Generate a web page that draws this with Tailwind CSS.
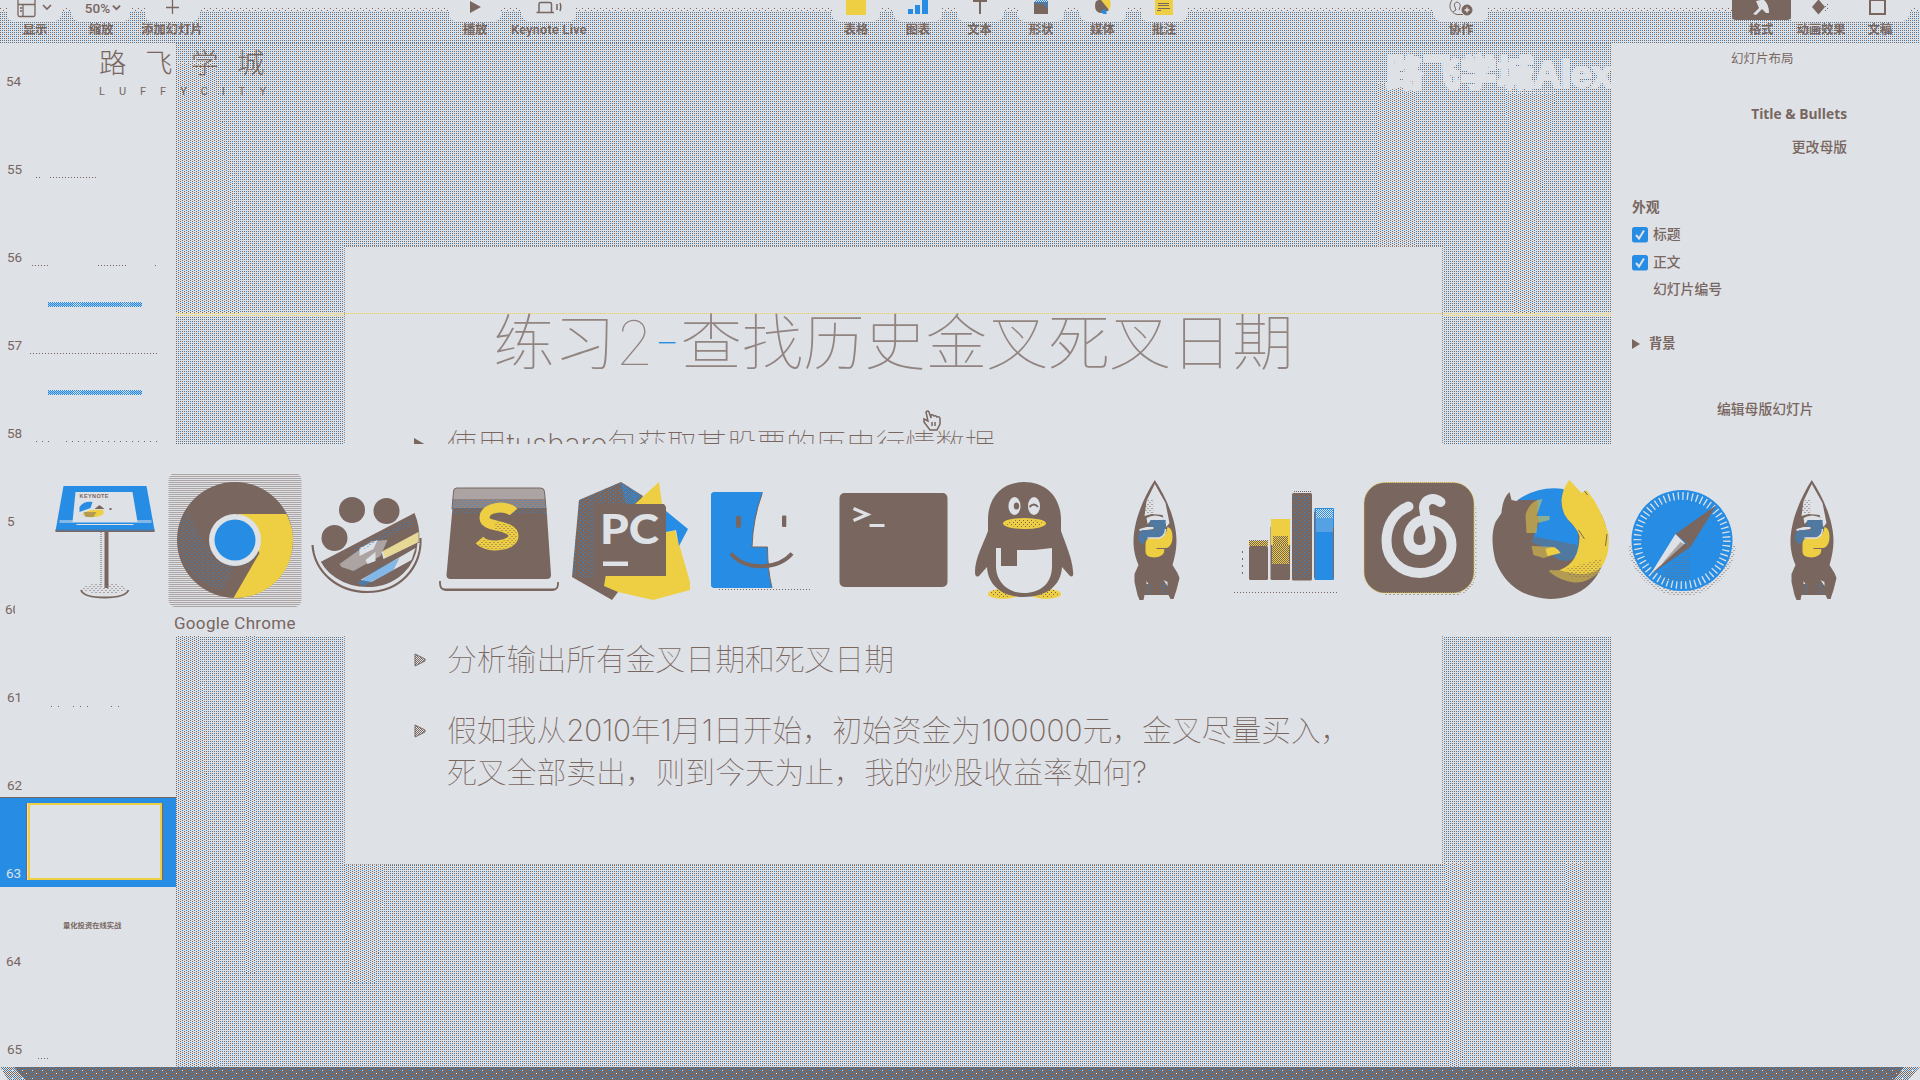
<!DOCTYPE html>
<html lang="zh-CN">
<head>
<meta charset="utf-8">
<title>Keynote</title>
<script src="https://cdn.jsdelivr.net/npm/@tailwindcss/browser@4"></script>
</head>
<body class="w-[1920px] h-[1080px] overflow-hidden bg-[#dee1e6] text-[#78665f] font-['Liberation_Sans','Noto_Sans_CJK_SC',sans-serif]">
<svg class="absolute w-0 h-0" shape-rendering="crispEdges">
  <defs>
    <pattern id="mesh" width="6" height="4" patternUnits="userSpaceOnUse"><path fill="#78665f" d="M0 0h1v1h-1zM2 0h1v1h-1zM0 2h1v1h-1zM4 2h1v1h-1z"/><path fill="#278ce3" d="M4 0h1v1h-1zM2 2h1v1h-1z"/></pattern>
    <pattern id="mesh2" width="4" height="4" patternUnits="userSpaceOnUse"><path fill="#78665f" d="M0 0h1v1h-1zM2 1h1v1h-1zM0 2h1v1h-1z"/><path fill="#278ce3" d="M2 3h1v1h-1z"/></pattern>
    <pattern id="dots" width="4" height="4" patternUnits="userSpaceOnUse"><path fill="#78665f" d="M0 0h1v1h-1zM2 0h1v1h-1zM1 2h1v1h-1zM3 2h1v1h-1z"/></pattern>
    <pattern id="fade" width="6" height="4" patternUnits="userSpaceOnUse"><path fill="#78665f" d="M0 0h1v1h-1zM3 2h1v1h-1z"/></pattern>
    <pattern id="bluecheck" width="2" height="2" patternUnits="userSpaceOnUse"><path fill="#278ce3" d="M0 0h1v1h-1zM1 1h1v1h-1z"/></pattern>
    <pattern id="browncheck" width="2" height="2" patternUnits="userSpaceOnUse"><path fill="#78665f" d="M0 0h1v1h-1zM1 1h1v1h-1z"/></pattern>
    <pattern id="lightcheck" width="2" height="2" patternUnits="userSpaceOnUse"><path fill="#dee1e6" d="M0 0h1v1h-1zM1 1h1v1h-1z"/></pattern>
    <pattern id="yellowcheck" width="2" height="2" patternUnits="userSpaceOnUse"><path fill="#eecf43" d="M0 0h1v1h-1zM1 1h1v1h-1z"/></pattern>
    <pattern id="bluespeck" width="5" height="4" patternUnits="userSpaceOnUse"><path fill="#278ce3" d="M0 0h1v1h-1zM3 2h1v1h-1z"/></pattern>
    <pattern id="brownspeck" width="4" height="4" patternUnits="userSpaceOnUse"><path fill="#78665f" d="M0 0h1v1h-1zM2 2h1v1h-1z"/></pattern>
    <pattern id="floor" width="10" height="8" patternUnits="userSpaceOnUse"><path fill="#278ce3" d="M0 0h1v1h-1zM3 2h1v1h-1zM6 1h1v1h-1zM8 3h1v1h-1zM1 5h1v1h-1zM5 4h1v1h-1zM8 6h1v1h-1zM4 7h1v1h-1zM3 0h1v1h-1zM9 1h1v1h-1zM0 3h1v1h-1zM5 2h1v1h-1zM3 5h1v1h-1z"/><path fill="#dee1e6" d="M2 3h1v1h-1zM6 6h1v1h-1z"/></pattern>
    <symbol id="rocket" viewBox="1090.5 470 131.5 140">
      <path fill="#78665f" d="M1155.300 480C1145 496 1134 520 1134 542C1134 552 1137 560 1139 565L1135 574V582L1138 595L1140 600H1144L1145 595H1169L1171 599H1174L1177 590L1180 578L1178 573L1173 565C1175 558 1177 550 1177 541C1177 520 1166 496 1155.300 480Z"/>
      <path fill="#dee1e6" d="M1155.300 484L1147 501L1145 516L1152 514L1163 515L1167 527L1170 523L1166 503Z"/>
      <path fill="url(#brownspeck)" d="M1148 500H1154V514H1144Z"/>
      <path fill="#dee1e6" d="M1147 518Q1155 513 1165 518L1164 520H1152L1148 524ZM1140 529L1147 527H1154V529L1140 531Z"/>
      <path fill="#278ce3" d="M1151 520H1166V530Q1166 537 1158 537H1150Q1145 540 1143 545L1139 540Q1138 531 1144 530H1155V527H1150Z"/>
      <path fill="url(#browncheck)" d="M1151 520H1166V530Q1166 537 1158 537H1150Q1145 540 1143 545L1139 540Q1138 531 1144 530H1155V527H1150Z"/>
      <path fill="#eecf43" d="M1168 527Q1173 528 1173 537Q1173 546 1167 548H1157V549H1165Q1165 557 1155 557.500Q1146 557 1146 552V544Q1146 538 1152 538H1160Q1167 536 1168 527Z"/>
      <path fill="none" stroke="#dee1e6" stroke-width="1.500" d="M1148 538H1160Q1166 536 1166 529"/>
      <path fill="#dee1e6" d="M1147 581L1149 584H1147ZM1164 580L1168 582V586L1166 583Z"/>
      <path fill="url(#bluespeck)" d="M1146 584H1152V594H1146ZM1160 584H1168V594H1160Z"/>
    </symbol>
  </defs>
</svg>

<div class="flex flex-col w-[1920px] h-[1080px]">
  <!-- toolbar -->
  <header class="relative h-[43px] shrink-0">
    <svg class="absolute inset-0 w-full h-full"><rect y="7" width="1920" height="5" fill="url(#fade)"/><rect y="12" width="1920" height="32" fill="url(#mesh)"/></svg>
    <div class="relative flex h-full text-[12.300px] leading-[18px] font-bold whitespace-nowrap">
      <div class="w-[68px] flex flex-col items-center"><div class="w-[54px] h-[21px] rounded-b-md bg-[#dee1e6] flex justify-center gap-[5px]">
        <svg class="w-[20px] h-[21px]" viewBox="0 0 20 21" fill="none" stroke="#78665f" stroke-width="1.300"><path d="M1 0V15Q1 16.500 2.500 16.500H16.500Q18 16.500 18 15V0M1 4.500H18M6 4.500V16.500M3 8H5M3 11H5"/></svg><svg class="w-[10px] h-[21px]" viewBox="0 0 10 21" fill="none" stroke="#78665f" stroke-width="1.600"><path d="M1 5L5 9L9 5"/></svg></div><span class="pl-[2px]">显示</span></div>
      <div class="w-[66px] flex flex-col items-center"><div class="w-[58px] h-[21px] rounded-b-md bg-[#dee1e6] flex justify-center gap-[2px] pl-1 text-[13.500px] leading-[16px] font-['Roboto',sans-serif] font-medium"><span>50%</span><svg class="w-[9px] h-[21px]" viewBox="0 0 10 21" fill="none" stroke="#78665f" stroke-width="2"><path d="M1 5L5 9L9 5"/></svg></div><span>缩放</span></div>
      <div class="w-[76px] flex flex-col items-center"><div class="w-[54px] h-[21px] rounded-b-md bg-[#dee1e6] flex justify-center"><svg class="w-[14px] h-[21px]" viewBox="0 0 14 21" stroke="#78665f"><path d="M7.500 0V14M1 7.500H14" stroke-width="1.300"/></svg></div><span>添加幻灯片</span></div>
      <div class="w-[60px] ml-[235px] flex flex-col items-center"><div class="w-[52px] h-[21px] rounded-b-md bg-[#dee1e6] flex justify-center"><svg class="w-[12px] h-[21px]" viewBox="0 0 12 21"><path fill="#78665f" d="M1 1L12 7L1 13Z"/></svg></div><span>播放</span></div>
      <div class="w-[88px] flex flex-col items-center"><div class="w-[54px] h-[21px] rounded-b-md bg-[#dee1e6] flex justify-center"><svg class="w-[26px] h-[21px]" viewBox="0 0 26 21" fill="none" stroke="#78665f" stroke-width="1.500"><path d="M3 12V4Q3 2.500 4.500 2.500H14Q15.500 2.500 15.500 4V12M0.500 12.500H18M21 4V10M24 3Q25.500 7 24 11"/></svg></div><span class="font-semibold text-[12.500px] tracking-[0.35px] font-['Roboto',sans-serif]">Keynote Live</span></div>
      <div class="w-[62px] ml-[232px] flex flex-col items-center"><div class="w-[48px] h-[21px] rounded-b-md bg-[#dee1e6] flex justify-center"><div class="w-[20px] h-[15px] bg-[#eecf43]"></div></div><span>表格</span></div>
      <div class="w-[62px] flex flex-col items-center"><div class="w-[48px] h-[21px] rounded-b-md bg-[#dee1e6] flex justify-center"><svg class="w-[20px] h-[21px]" viewBox="0 0 20 21" fill="#278ce3"><path d="M0 9H5V14H0ZM7 5H12V14H7ZM14 0H20V14H14Z"/></svg></div><span>图表</span></div>
      <div class="w-[61px] flex flex-col items-center"><div class="w-[46px] h-[21px] rounded-b-md bg-[#dee1e6] flex justify-center"><svg class="w-[14px] h-[21px]" viewBox="0 0 14 21" fill="#78665f"><path d="M0 0H14V2H8V14H6V2H0Z"/></svg></div><span>文本</span></div>
      <div class="w-[62px] flex flex-col items-center"><div class="w-[46px] h-[21px] rounded-b-md bg-[#dee1e6] flex justify-center"><svg class="w-[14px] h-[21px]" viewBox="0 0 14 21"><path fill="#78665f" d="M0 2H14V14H0Z"/><path fill="url(#bluecheck)" d="M1 0H14V8L8 4H1Z"/></svg></div><span>形状</span></div>
      <div class="w-[61px] flex flex-col items-center"><div class="w-[46px] h-[21px] rounded-b-md bg-[#dee1e6] flex justify-center"><svg class="w-[18px] h-[21px]" viewBox="0 0 18 21"><path fill="#eecf43" d="M6 0H16Q18 6 14 11Z"/><path fill="#78665f" d="M1 6Q1 0 5 0H7L15 10L10 13Q1 14 1 6Z"/><path fill="#278ce3" d="M7 11L11 9L13 14H9Z"/></svg></div><span>媒体</span></div>
      <div class="w-[62px] flex flex-col items-center"><div class="w-[46px] h-[21px] rounded-b-md bg-[#dee1e6] flex justify-center"><svg class="w-[18px] h-[21px]" viewBox="0 0 18 21"><path fill="#eecf43" d="M0 0H18V15H0Z"/><path stroke="#78665f" d="M3 3.500H14M3 5.500H14M3 8.500H15M2 10.500H6"/></svg></div><span>批注</span></div>
      <div class="w-[62px] ml-[235px] flex flex-col items-center"><div class="w-[54px] h-[21px] rounded-b-md bg-[#dee1e6] flex justify-center"><svg class="w-[26px] h-[21px]" viewBox="0 0 26 21" fill="none" stroke="#78665f"><path d="M4 0C0 5 2 13 9 14.500H15M9 2Q5 3 7 7L8 10L5 12M9 2Q13 3 12 7L11 10"/><circle cx="19" cy="10" r="5" fill="#78665f"/><path stroke="#dee1e6" stroke-width="1.500" d="M16.500 10H21.500M19 7.500V12.500"/></svg></div><span>协作</span></div>
      <div class="w-[60px] ml-[239px] flex flex-col items-center"><div class="w-[59px] h-[20px] mb-[1px] rounded-b-sm bg-[#78665f] flex justify-center"><svg class="w-[18px] h-[20px]" viewBox="0 0 18 20"><path fill="#dee1e6" d="M4 1L9 0H12Q17 4 17 13H14L10 9L4 15L1 14L7 8Z"/></svg></div><span>格式</span></div>
      <div class="w-[60px] flex flex-col items-center"><div class="w-[60px] h-[21px] bg-[#dee1e6] flex justify-center"><svg class="w-[20px] h-[21px]" viewBox="0 0 20 21"><path fill="#78665f" d="M7 0H8L14 7L7.500 14.500L1 7Z"/><path fill="url(#brownspeck)" d="M14 3H17V11H14Z"/></svg></div><span>动画效果</span></div>
      <div class="w-[58px] flex flex-col items-center"><div class="w-[58px] h-[21px] rounded-br-md bg-[#dee1e6] flex justify-center"><div class="w-[17px] h-[15px] mr-[6px] border-2 border-t-1 border-[#78665f]"></div></div><span>文稿</span></div>
    </div>
  </header>

  <main class="flex h-[1024px]">
    <!-- slide navigator -->
    <aside class="w-[176px] shrink-0 flex flex-col text-[13.500px] leading-[28px] font-['Roboto',sans-serif]">
      <div class="h-[52px] shrink-0 flex items-end pl-[6px]">54</div>
      <div class="h-[88px] shrink-0 flex items-end pl-[7px]">55<svg class="w-[60px] h-[7px] ml-[14px]"><path stroke="#78665f" stroke-dasharray="1 2" d="M0 1.500H4M14 1.500H60"/></svg></div>
      <div class="h-[88px] shrink-0 flex items-end pl-[7px]">56<svg class="w-[130px] h-[7px] ml-[10px]"><path stroke="#78665f" stroke-dasharray="1 2" d="M0 1.500H17M66 1.500H95M123 1.500H124"/></svg></div>
      <div class="h-[88px] shrink-0 flex items-end pl-[7px] relative">57<svg class="w-[130px] h-[7px] ml-[8px]"><path stroke="#78665f" stroke-dasharray="1 2" d="M0 1.500H128"/></svg><svg class="absolute left-[48px] top-[31px] w-[94px] h-[5px]"><rect width="94" height="5" fill="url(#bluecheck)"/><path stroke="#278ce3" stroke-width="3" d="M0 2.500H25M33 2.500H74M82 2.500H94" stroke-opacity=".4"/></svg></div>
      <div class="h-[88px] shrink-0 flex items-end pl-[7px] relative">58<svg class="w-[130px] h-[7px] ml-[14px]"><path stroke="#78665f" stroke-dasharray="1 5" d="M0 1.500H18M30 1.500H123"/></svg><svg class="absolute left-[48px] top-[31px] w-[94px] h-[5px]"><rect width="94" height="5" fill="url(#bluecheck)"/><path stroke="#278ce3" stroke-width="3" d="M0 2.500H25M33 2.500H74M82 2.500H94" stroke-opacity=".4"/></svg></div>
      <div class="h-[88px] shrink-0 flex items-end pl-[7px]">59</div>
      <div class="h-[88px] shrink-0 flex items-end pl-[5px]">60</div>
      <div class="h-[88px] shrink-0 flex items-end pl-[7px]">61<svg class="w-[80px] h-[7px] ml-[29px]"><path stroke="#78665f" stroke-dasharray="1 6" d="M0 2.500H8M22 2.500H43M60 2.500H72"/></svg></div>
      <div class="h-[86px] shrink-0 flex items-end pl-[7px] leading-[24px]">62</div>
      <div class="h-[90px] shrink-0 flex items-end pl-[6px] bg-[#278ce3] border-t border-[#78665f] text-[#dee1e6] relative">63<div class="absolute left-[26px] top-[5px] w-[137px] h-[77px] border-l border-r border-[#78665f] bg-[#dee1e6]"><div class="w-[134px] h-[77px] ml-px border-2 border-[#eecf43]"></div></div></div>
      <div class="h-[88px] shrink-0 flex items-end pl-[6px] relative">64<div class="absolute left-[63px] top-[33px] text-[7.300px] leading-[11px] font-bold whitespace-nowrap font-['Noto_Sans_CJK_SC',sans-serif]">量化投资在线实战</div></div>
      <div class="h-[88px] shrink-0 flex items-end pl-[7px]">65<svg class="w-[12px] h-[7px] ml-[16px]"><path stroke="#78665f" stroke-dasharray="1 2" d="M0 2.500H11"/></svg></div>
    </aside>

    <!-- editing canvas -->
    <section class="relative w-[1436px] shrink-0">
      <svg class="absolute inset-0 w-full h-full" shape-rendering="crispEdges"><rect width="1436" height="1024" fill="url(#mesh)"/>
        <path fill="#dee1e6" d="M0 20H38L64 200V270H0ZM1200 40H1240V250H1200ZM1330 50H1380L1360 190V270H1335ZM1270 820H1296L1286 1024H1274ZM1390 820H1410L1406 1024H1394ZM0 590H24L44 1024H0ZM70 590H80V930H70ZM168 822H210L200 940H172Z"/>
        <path fill="url(#mesh2)" d="M0 20H38L64 200V270H0ZM1200 40H1240V250H1200ZM1330 50H1380L1360 190V270H1335ZM1270 820H1296L1286 1024H1274ZM1390 820H1410L1406 1024H1394ZM0 590H24L44 1024H0ZM70 590H80V930H70ZM168 822H210L200 940H172Z"/>
        <path stroke="#eecf43" stroke-dasharray="1 1" d="M0 270.500H1436M0 272.500H1436"/></svg>
      <div class="relative mt-[203px] ml-[168px] w-[1099px] h-[619px] bg-[#dee1e6] pt-[66px] pl-[70px] outline-1 outline-offset-[-1px] outline-dotted outline-[#78665f]/70">
        <svg class="absolute left-0 top-[67px] w-[1099px] h-[1px]"><path stroke="#eecf43" stroke-dasharray="1 1" d="M0 .5H1099"/></svg>
        <h1 class="relative pl-[79px] text-[61.300px] leading-[62px] whitespace-nowrap font-thin text-[#78665f]/75 font-['Inter','Noto_Sans_CJK_SC',sans-serif]">练习2<span class="text-[#278ce3]">-</span>查找历史金叉死叉日期</h1>
        <ul class="relative mt-[50px] text-[29.800px] leading-[41.500px] whitespace-nowrap font-thin font-['Inter','Noto_Sans_CJK_SC',sans-serif]">
          <li class="flex gap-[20px]"><svg class="w-[13px] h-[42px]" viewBox="0 0 13 42"><path fill="#78665f" d="M0 14L12 21L0 28Z"/></svg><p>使用<span class="font-extralight">tushare</span>包获取某股票的历史行情数据</p></li>
          <li class="flex gap-[20px] mt-[173px]"><svg class="w-[13px] h-[42px]" viewBox="0 0 13 42"><path fill="url(#browncheck)" stroke="#78665f" d="M1 15V27L11 22V20Z"/></svg><p>分析输出所有金叉日期和死叉日期</p></li>
          <li class="flex gap-[20px] mt-[29px]"><svg class="w-[13px] h-[42px]" viewBox="0 0 13 42"><path fill="url(#browncheck)" stroke="#78665f" d="M1 15V27L11 22V20Z"/></svg><p>假如我从<span class="font-extralight tracking-[-0.3px]">2010</span>年<span class="font-extralight">1</span>月<span class="font-extralight">1</span>日开始，初始资金为<span class="font-extralight">100000</span>元，金叉尽量买入，<br>死叉全部卖出，则到今天为止，我的炒股收益率如何<span class="font-extralight">?</span></p></li>
        </ul>
      </div>
    </section>

    <!-- format inspector -->
    <aside class="w-[308px] shrink-0 pt-[6px] pl-[20px] flex flex-col text-[13.800px] leading-[20px] font-medium">
      <div class="pl-[99px] text-[12.500px] font-normal">幻灯片布局</div>
      <div class="w-[215px] mt-[35px] text-right font-bold text-[13.800px] font-['Open_Sans',sans-serif] leading-[20px] whitespace-nowrap">Title &amp; Bullets</div>
      <div class="w-[215px] mt-[14px] text-right">更改母版</div>
      <div class="mt-[40px] font-bold">外观</div>
      <div class="mt-[7px] flex items-center gap-[5px]"><svg class="w-[16px] h-[16px]" viewBox="0 0 16 16"><rect width="16" height="15.500" rx="2.500" fill="#278ce3"/><path fill="none" stroke="#dee1e6" stroke-width="2" d="M4 8L7 11.500L12 3.500"/></svg>标题</div>
      <div class="mt-[8px] flex items-center gap-[5px]"><svg class="w-[16px] h-[16px]" viewBox="0 0 16 16"><rect width="16" height="15.500" rx="2.500" fill="#278ce3"/><path fill="none" stroke="#dee1e6" stroke-width="2" d="M4 8L7 11.500L12 3.500"/></svg>正文</div>
      <div class="mt-[7px] pl-[21px]">幻灯片编号</div>
      <div class="mt-[34px] flex items-center gap-[9px] font-bold text-[13.200px]"><svg class="w-[8px] h-[10px]" viewBox="0 0 8 10"><path fill="#78665f" d="M0 0L8 5L0 10Z"/></svg>背景</div>
      <div class="mt-[46px] pl-[85px]">编辑母版幻灯片</div>
    </aside>
  </main>
  <footer class="h-[13px] shrink-0 bg-[#78665f] relative"><svg class="w-full h-full"><rect width="1920" height="13" fill="url(#floor)"/><path fill="#dee1e6" d="M0 0L8 13H0ZM1920 0L1908 13H1920Z"/><path fill="url(#lightcheck)" d="M0 0H14L26 13H0ZM1920 0H1904L1894 13H1920Z"/></svg></footer>
</div>

<!-- watermarks -->
<div class="absolute left-[99px] top-[42px] font-['Noto_Sans_CJK_SC',sans-serif] whitespace-nowrap">
  <div class="text-[27.500px] leading-[38px] tracking-[18.500px] font-light">路飞学城</div>
  <div class="text-[11px] leading-[14px] pt-[5px] flex w-[167px] justify-between font-['Roboto',sans-serif]"><span>L</span><span>U</span><span>F</span><span>F</span><span>Y</span><span>C</span><span>I</span><span>T</span><span>Y</span></div>
</div>
<div class="absolute left-[1386px] top-[51px] w-[226px] overflow-hidden text-[37px] leading-[48px] font-black text-[#dee1e6] whitespace-nowrap [-webkit-text-stroke:2px_#dee1e6]">路飞学城Alex</div>

<!-- pointer -->
<svg class="absolute left-[922px] top-[410px] w-[20px] h-[21px]" viewBox="0 0 20 21" fill="#dee1e6" stroke="#78665f" stroke-width="1.500"><path d="M4 2Q6 0 7 2L9 8V5Q11 4 12 6Q14 5 15 7Q18 6 18 9V14L15 20H8L2 12V9L6 11L4 2ZM10 12V16M13 12V16"/></svg>

<!-- application switcher -->
<nav class="absolute left-[15px] top-[444px] w-[1905px] h-[192px] bg-[#dee1e6] pl-[22.700px] pt-[26px]">
  <div class="flex">
    <svg class="w-[131.500px] h-[140px] shrink-0" viewBox="38.500 470 131.500 140">
      <path fill="#278ce3" d="M64 486H147L155 530V531H56Z"/><path fill="url(#lightcheck)" d="M60 520H152V523H60Z"/><path fill="#dee1e6" d="M76 492H133L138 522H73Z"/>
      <path fill="#78665f" d="M56 529.500H155V532H56Z"/><path fill="url(#bluecheck)" d="M57 527H154V531H57Z"/><path stroke="#dee1e6" d="M77 524.500H134"/>
      <text x="80" y="497.500" font-size="5.500" textLength="29" font-weight="700" fill="#78665f">KEYNOTE</text>
      <path fill="#278ce3" d="M80 507Q84 501 93 502L91 508L80 512Z"/><path fill="#eecf43" d="M83 515Q85 509 104 510V514Q98 518 88 517Z"/><path fill="url(#browncheck)" d="M84 512H97L94 517H86Z"/><path fill="#78665f" d="M95 509L100 505L105 509ZM110 508h2v2h-2z"/>
      <ellipse cx="105" cy="590" rx="23" ry="7" fill="url(#brownspeck)"/><path fill="#dee1e6" d="M82 590Q105 598 128 590V594Q105 601 82 594Z"/><path fill="none" stroke="#78665f" stroke-width="1.800" d="M81.500 590Q84 597.500 105 597.500Q126 597.500 129 590"/>
      <path fill="#dee1e6" d="M101 532H105V588H101Z"/><path fill="#78665f" d="M105 532H109V588H105Z"/><path stroke="#78665f" stroke-dasharray="1 1" d="M101.500 532V588"/>
    </svg>
    <div class="w-[131.500px] shrink-0 flex flex-col items-center">
      <svg class="w-[135px] h-[140px] shrink-0" viewBox="168.500 470 135 140">
        <rect x="170" y="473" width="133" height="134" rx="7" fill="url(#dots)"/>
        <circle cx="236.500" cy="540" r="58" fill="#78665f"/>
        <path fill="url(#bluespeck)" d="M188 511L216 560L236 566L225 590Q185 582 180 545Q179 525 188 511Z"/>
        <path fill="#eecf43" d="M240 514H288Q295 528 294.500 540Q294 570 271 587Q256 598 235 598L261 553Z"/>
        <circle cx="236.500" cy="540" r="26" fill="#dee1e6"/><circle cx="236.500" cy="540" r="20.500" fill="#278ce3"/>
      </svg>
      <div class="text-[17px] leading-[27px] whitespace-nowrap font-['Roboto',sans-serif] tracking-[0.35px]">Google Chrome</div>
    </div>
    <svg class="w-[131.500px] h-[140px] shrink-0" viewBox="301.500 470 131.500 140">
      <g fill="#78665f"><circle cx="352.500" cy="510" r="13"/><circle cx="387" cy="511" r="13"/><circle cx="335" cy="538" r="13"/>
      <path d="M321 562L415 513Q426 540 412 565Q396 588 367 588Q336 587 321 562Z"/></g>
      <path fill="none" stroke="#78665f" stroke-width="2.200" d="M313 545C315 572 338 592 368 592C400 592 422 568 421 538"/>
      <path fill="none" stroke="#dee1e6" stroke-width="2" d="M316 552C323 575 344 588 368 588C398 588 418 566 419 543"/>
      <path fill="url(#lightcheck)" d="M340 564L372 541L388 540L381 556L354 571L342 567Z"/><path fill="#dee1e6" d="M360 548L378 540L374 549L360 556ZM366 560L376 552V561L368 564Z"/>
      <path fill="#dee1e6" d="M382 552L419 532V542L384 559Z"/><path fill="url(#yellowcheck)" d="M383 551L419 532V542L386 558Z"/><path fill="#dee1e6" d="M361 580L378 570L416 548L412 560L372 582Z"/><path fill="url(#bluecheck)" d="M358 583L378 569L400 558L394 570L364 586Z"/><path fill="url(#browncheck)" d="M376 580L410 562L402 573L380 583Z"/>
      <path fill="url(#bluespeck)" d="M355 548L414 517V524L355 554Z"/>
    </svg>
    <svg class="w-[131.500px] h-[140px] shrink-0" viewBox="432.500 470 131.500 140">
      <path fill="#78665f" d="M453 508H547L551.500 575Q551.500 579 547.500 579H451Q447 579 447 575Z"/>
      <path fill="url(#browncheck)" stroke="#78665f" d="M457 488H541Q545 488 545 492L546.500 509H452.500L454 492Q454 488 457 488Z"/><path fill="url(#browncheck)" d="M453 499H546V509H453Z"/><path fill="url(#bluespeck)" d="M453 499H546V513H453Z"/>
      <path fill="none" stroke="#78665f" stroke-width="1.800" d="M440.500 581Q440 590 446 590H553Q559 590 558.500 582"/><path stroke="#78665f" stroke-dasharray="1 1" d="M444 588.500H556"/>
      <path fill="none" stroke="#eecf43" stroke-width="10" d="M514 512C508 505 485 506 485 518C485 528 514 524 514 536C514 546 488 549 480 540"/>
      <path fill="none" stroke="url(#brownspeck)" stroke-width="8" d="M495 526C508 527 514 531 514 536C514 546 490 549 481 541"/>
    </svg>
    <svg class="w-[131.500px] h-[140px] shrink-0" viewBox="564 470 131.500 140">
      <path fill="#78665f" d="M579 500L621 482L643 496L635 510L618 592L612 600L572 577Z"/><path fill="url(#bluespeck)" d="M579 500L621 482L643 496L635 504H595V578L572 576Z"/><path fill="url(#bluecheck)" d="M621 483L642 496L634 504H626Z"/>
      <path fill="#eecf43" d="M635 504L659 482L662 504ZM664 533L675 530L690 582V590L653 600L618 592L604 586L606 574Z"/><path fill="#278ce3" d="M666 511L688 529L679 546L676 530L666 532Z"/>
      <path fill="#78665f" d="M595 504H664L666 507V576H595Z"/>
      <text x="600" y="544" font-size="41" textLength="59" lengthAdjust="spacingAndGlyphs" font-family="Lato" font-weight="900" fill="#dee1e6">PC</text><path fill="#dee1e6" d="M603 561.500H628V566H603Z"/>
    </svg>
    <svg class="w-[131.500px] h-[140px] shrink-0" viewBox="696 470 131.500 140">
      <path fill="#278ce3" d="M714 492H764Q754 518 753 547H768.500Q768.500 570 773 588H714L712 586V494Z"/><path fill="none" stroke="#78665f" stroke-width="1" d="M763 494Q754 518 753 547H768.500Q768.500 570 773 588"/>
      <rect x="737" y="515.500" width="5" height="12.500" rx="2.500" fill="#78665f"/><rect x="783" y="515.500" width="4.300" height="11.500" rx="1" fill="#78665f"/>
      <path fill="none" stroke="#78665f" stroke-width="4" d="M732 553.500C746 570.500 778 570.500 793 553.500"/><path stroke="#78665f" stroke-dasharray="1 2" d="M720 589.500H811"/>
    </svg>
    <svg class="w-[131.500px] h-[140px] shrink-0" viewBox="827.500 470 131.500 140">
      <rect x="840" y="493" width="108" height="94" rx="5" fill="#78665f"/><path fill="none" stroke="#dee1e6" stroke-width="3.200" d="M854 508.500L868 514.500L854 520.500M870 525.500H885"/>
    </svg>
    <svg class="w-[131.500px] h-[140px] shrink-0" viewBox="959 470 131.500 140">
      <g fill="#eecf43"><ellipse cx="1004" cy="594" rx="15" ry="5"/><ellipse cx="1047" cy="594" rx="15" ry="5"/></g><g fill="url(#brownspeck)"><ellipse cx="1004" cy="593" rx="13" ry="4"/><ellipse cx="1047" cy="593" rx="13" ry="4"/></g>
      <path fill="#78665f" d="M1025 482C1002 482 989 498 989 520V531C984 545 976 558 976 572Q976 578 980 576L988 567C989 586 1004 597 1025 597C1047 597 1062 586 1063 567L1071 576Q1075 578 1074 571C1073 558 1067 545 1062 531V520C1062 498 1048 482 1025 482Z"/>
      <path fill="#dee1e6" d="M997 548H1002V566H1018V550H1035L1053 548V566C1053 584 1041 593 1025 593C1009 593 997 582 997 566Z"/>
      <g fill="#dee1e6"><ellipse cx="1015.500" cy="506" rx="6" ry="9"/><ellipse cx="1035" cy="506" rx="6" ry="9"/></g><ellipse cx="1017.500" cy="506" rx="2.700" ry="3.500" fill="#78665f"/><path fill="none" stroke="#78665f" stroke-width="2" d="M1030.500 507Q1035 502 1039 507"/>
      <ellipse cx="1025.500" cy="523.500" rx="21.500" ry="5.500" fill="#eecf43"/><ellipse cx="1025.500" cy="523.500" rx="18" ry="4" fill="url(#brownspeck)"/>
    </svg>
    <svg class="w-[131.500px] h-[140px] shrink-0"><use href="#rocket" width="131.500" height="140"/></svg>
    <svg class="w-[131.500px] h-[140px] shrink-0" viewBox="1222 470 131.500 140">
      <g fill="#78665f"><rect x="1250" y="546" width="19" height="34" rx="1.500"/><rect x="1271.500" y="526" width="19.500" height="54" rx="1.500"/><rect x="1293" y="493" width="20" height="87.500" rx="1.500"/></g>
      <path fill="#eecf43" d="M1250 541H1269V546H1250ZM1272 519H1291V545H1272Z"/><path fill="url(#browncheck)" d="M1250 540H1269V546H1250ZM1274 536H1289V550H1274Z"/><path fill="url(#yellowcheck)" d="M1273 545H1290V564H1273Z"/><path fill="url(#bluespeck)" d="M1294 495H1312V578H1294Z"/><path stroke="#78665f" stroke-dasharray="1 1" d="M1295 491.500H1312"/>
      <rect x="1315.500" y="508" width="19.500" height="72" rx="1" fill="#278ce3"/><path fill="url(#lightcheck)" d="M1317 509H1334V518H1317Z"/><path fill="#dee1e6" fill-opacity=".25" d="M1317 518H1334V532H1317Z"/><path stroke="#78665f" d="M1315.500 512V578M1334.500 527V578"/>
      <path stroke="#78665f" stroke-dasharray="1 2" d="M1235 592.500H1338"/><path stroke="#78665f" stroke-dasharray="2 5" d="M1243.500 551V576"/>
    </svg>
    <svg class="w-[131.500px] h-[140px] shrink-0" viewBox="1353.500 470 131.500 140">
      <rect x="1369" y="489" width="108" height="107" rx="24" fill="url(#brownspeck)"/><rect x="1364" y="482" width="111" height="111.500" rx="22" fill="#dee1e6"/><rect x="1364.500" y="482.500" width="110" height="110.500" rx="21" fill="#78665f" stroke="#eecf43" stroke-dasharray="1 1"/>
      <path fill="none" stroke="#dee1e6" stroke-width="10" stroke-linecap="round" d="M1409 506.500C1395 512 1387 525 1387 541C1387 560 1402 573 1420 573C1440 573 1452 559 1452 545C1452 530 1441 520 1427 519.500C1415 520 1409 529 1409 538C1409 546 1414 550 1420 550C1427 550 1431 545 1431 539C1431 530 1425 518 1424.500 507C1425 500 1433 496 1441 502"/>
    </svg>
    <svg class="w-[131.500px] h-[140px] shrink-0" viewBox="1484.500 470 131.500 140">
      <path fill="#78665f" d="M1510 492L1512 500L1517 501Q1550 480 1583 496Q1609 510 1608 545Q1600 598 1550 599Q1510 597 1496 561Q1490 537 1496 522L1502 513Q1503 498 1510 492Z"/>
      <path fill="#278ce3" d="M1518 500Q1540 485 1564 489L1562 505Q1564 517 1578 530Q1581 552 1575 558Q1560 567 1548 549L1532 542L1540 522L1538 515V500Z"/><path fill="url(#browncheck)" d="M1532 536L1578 545Q1578 564 1560 564Q1550 550 1532 545Z"/>
      <path fill="url(#yellowcheck)" d="M1543 499Q1530 500 1526 515L1527 533H1537L1538 523L1550 520V516H1537ZM1532 546L1555 547L1560 553L1544 558L1534 555Z"/><path fill="#eecf43" d="M1546 549Q1556 544 1561 553L1548 556Z"/>
      <path fill="#eecf43" d="M1570 480L1582 493L1587 490Q1602 508 1609 534Q1611 556 1601 568Q1587 579 1560 570Q1580 563 1580 536Q1578 529 1568 519Q1562 512 1562 500Q1563 488 1570 480Z"/>
      <path fill="url(#yellowcheck)" d="M1550 570Q1580 572 1602 556L1600 572Q1585 585 1572 582Q1560 580 1550 572Z"/><path fill="url(#brownspeck)" d="M1566 569L1602 558L1600 573Q1590 581 1570 576Z"/><path stroke="#78665f" d="M1579 530L1585 539M1585 491L1588 495M1607.500 534L1606 546" fill="none"/>
    </svg>
    <svg class="w-[131.500px] h-[140px] shrink-0" viewBox="1616.500 470 131.500 140">
      <circle cx="1682.500" cy="542" r="54" fill="url(#brownspeck)"/><path fill="#dee1e6" d="M1620 475H1745V545H1620Z"/><circle cx="1682.500" cy="540.500" r="50.500" fill="#278ce3"/>
      <circle cx="1682.500" cy="540.500" r="44.500" fill="none" stroke="#dee1e6" stroke-width="8" stroke-dasharray="1.300 3.360"/><circle cx="1682.500" cy="540.500" r="40" fill="none" stroke="#278ce3" stroke-width="2" stroke-dasharray="4 4"/>
      <path fill="#78665f" d="M1717 505L1691 547L1676 534Z"/><path fill="#dee1e6" d="M1650.500 575L1676 534L1688 546Z"/><path fill="#78665f" d="M1650.500 575L1691 547L1686 543Z"/><path fill="url(#browncheck)" d="M1662 564L1681 542L1688 546Z"/><path fill="url(#brownspeck)" d="M1660 573L1690 550V582H1668Z"/>
    </svg>
    <svg class="w-[131.500px] h-[140px] shrink-0"><use href="#rocket" width="131.500" height="140"/></svg>
  </div>
</nav>
</body>
</html>
